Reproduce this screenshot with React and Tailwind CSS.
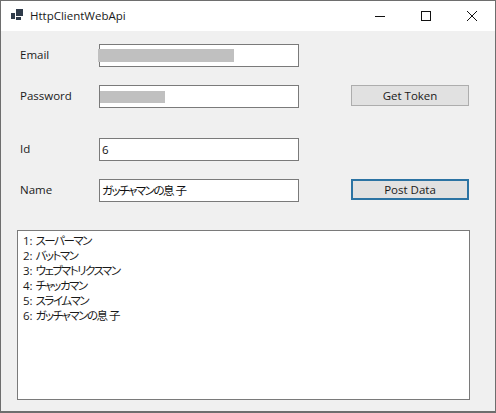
const font = { fontFamily: '"Open Sans", "Noto Sans CJK JP", sans-serif' };

const Label = ({ children }) => (
  <div className="w-[98px] shrink-0 pb-[2px] pl-[19px] text-[11.5px] leading-[16px] text-[#1a1a1a]">{children}</div>
);

const Field = ({ children }) => (
  <div className="flex h-[23px] w-[200px] shrink-0 items-center border border-[#7a7a7a] bg-white pl-[2px] text-[11.5px] leading-[16px] text-[#111] [font-feature-settings:'palt']">
    {children}
  </div>
);

const Btn = ({ children, focused }) => (
  <div
    className={
      focused
        ? "ml-[52px] flex h-[21px] w-[118px] items-center justify-center border-2 border-[#2b73a3] bg-[#e1e1e1] text-[11.5px] text-[#1a1a1a]"
        : "ml-[52px] flex h-[21px] w-[118px] items-center justify-center border border-[#adadad] bg-[#e1e1e1] text-[11.5px] text-[#1a1a1a]"
    }
  >
    {children}
  </div>
);

const Kana = ({ children }) => <span className="tracking-[-1.5px]">{children}</span>;
const Wide = ({ children }) => <span className="tracking-[1px]">{children}</span>;

const GatchaName = () => (
  <span>
    <Kana>ガッチャマンの</Kana>
    <Wide>息子</Wide>
  </span>
);

const items = [
  ["1: ", "スーパーマン"],
  ["2: ", "バットマン"],
  ["3: ", "ウェブマトリクスマン"],
  ["4: ", "チャッカマン"],
  ["5: ", "スライムマン"],
];

export default function App() {
  return (
    <div style={font} className="flex h-[413px] w-[496px] flex-col overflow-hidden border border-b-2 border-[#6e6e6e] bg-[#f0f0f0]">
      <div className="flex h-[30px] shrink-0 items-center bg-white">
        <svg width="16" height="16" viewBox="0 0 16 16" className="ml-[10px] shrink-0">
          <rect x="0" y="5" width="4" height="6" fill="#2f3b4a" />
          <rect x="5" y="1" width="7" height="7" fill="#2f3b4a" />
          <rect x="5" y="9" width="5" height="3" fill="#2f3b4a" />
        </svg>
        <div className="ml-[3px] text-[11.5px] text-[#1a1a1a]">HttpClientWebApi</div>
        <div className="ml-auto flex h-full items-center">
          <div className="flex h-full w-[46px] items-center justify-center">
            <svg width="12" height="12" viewBox="0 0 12 12"><path d="M1 6.5h10" stroke="#111" strokeWidth="1" /></svg>
          </div>
          <div className="flex h-full w-[46px] items-center justify-center">
            <svg width="12" height="12" viewBox="0 0 12 12"><rect x="1.5" y="1.5" width="9" height="9" fill="none" stroke="#111" strokeWidth="1" /></svg>
          </div>
          <div className="flex h-full w-[46px] items-center justify-center">
            <svg width="12" height="12" viewBox="0 0 12 12"><path d="M1 1l10 10M11 1L1 11" stroke="#111" strokeWidth="1" /></svg>
          </div>
        </div>
      </div>

      <div className="flex min-h-0 flex-1 flex-col pt-[13px]">
        <div className="flex items-center">
          <Label>Email</Label>
          <Field><div className="-ml-[4px] h-[13px] w-[136px] bg-[#c0c0c0]" /></Field>
        </div>
        <div className="mt-[18px] flex items-start">
          <div className="flex items-center">
            <Label>Password</Label>
            <Field><div className="-ml-[2px] h-[12px] w-[65px] bg-[#c0c0c0]" /></Field>
          </div>
          <Btn>Get Token</Btn>
        </div>
        <div className="mt-[30px] flex items-center">
          <Label>Id</Label>
          <Field>6</Field>
        </div>
        <div className="mt-[18px] flex items-start">
          <div className="flex items-center">
            <Label>Name</Label>
            <Field><GatchaName /></Field>
          </div>
          <Btn focused>Post Data</Btn>
        </div>
        <div className="mt-[28px] ml-[16px] h-[170px] w-[453px] border border-[#7a7a7a] bg-white pl-[5px] pt-[2px] text-[11.5px] leading-[15px] text-[#1a1a1a] [font-feature-settings:'palt']">
          {items.map(([n, t]) => (
            <div key={n}>{n}<Kana>{t}</Kana></div>
          ))}
          <div>6: <GatchaName /></div>
        </div>
      </div>
    </div>
  );
}
